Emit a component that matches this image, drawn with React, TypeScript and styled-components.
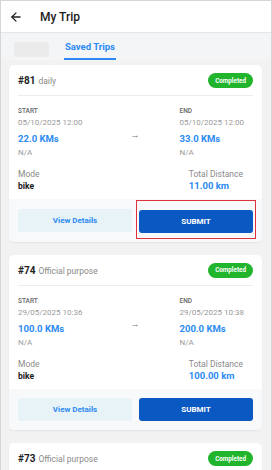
import React from "react";
import styled, { createGlobalStyle } from "styled-components";

const Global = createGlobalStyle`
  html, body { margin: 0; padding: 0; background: #f2f2f2; }
  body { font-family: Roboto, "Noto Sans", Arial, sans-serif; -webkit-font-smoothing: antialiased; }
  * { box-sizing: border-box; }
`;

const Frame = styled.div`
  width: 272px;
  height: 470px;
  overflow: hidden;
  border: 1px solid #d6d6d6;
  border-bottom: none;
  background: #f2f2f2;
`;

const TopBar = styled.div`
  height: 31px;
  background: #fff;
  display: flex;
  align-items: center;
  padding-left: 8px;
  box-shadow: 0 1px 1px rgba(0, 0, 0, 0.06);
  position: relative;
  z-index: 1;
`;

const BackBtn = styled.span`
  display: flex;
  width: 16px;
  color: #222;
`;

const Title = styled.h1`
  margin: 0 0 0 15px;
  font-size: 12px;
  font-weight: 500;
  color: #1a1a1a;
`;

const TabBar = styled.div`
  height: 28px;
  background: #f4f5f7;
  display: flex;
  align-items: stretch;
  padding-left: 13px;
  gap: 15px;
`;

const TabPlaceholder = styled.div`
  width: 35px;
  height: 15px;
  margin-top: 10px;
  background: #ebebeb;
  border-radius: 2px;
`;

const Tab = styled.div<{ $active?: boolean }>`
  display: flex;
  align-items: center;
  padding: 2px 1px 0 1px;
  font-size: 9.5px;
  font-weight: 700;
  color: #2b8af4;
  border-bottom: 2px solid ${(p) => (p.$active ? "#2b8af4" : "transparent")};
`;

const List = styled.div`
  padding: 5px 9px 0 8px;
  display: flex;
  flex-direction: column;
  gap: 13px;
`;

const Card = styled.div`
  background: #fff;
  border-radius: 5px;
  box-shadow: 0 1px 2px rgba(0, 0, 0, 0.06);
`;

const CardBody = styled.div`
  padding: 8px 9px 7px 9px;
`;

const CardHead = styled.div`
  display: flex;
  align-items: center;
  justify-content: space-between;
  height: 15px;
`;

const TripId = styled.div`
  display: flex;
  align-items: baseline;
  gap: 3px;
`;

const IdNum = styled.span`
  font-size: 10px;
  font-weight: 700;
  color: #222;
`;

const Purpose = styled.span`
  font-size: 8.5px;
  color: #8a8a8a;
`;

const Badge = styled.span`
  height: 15px;
  padding: 0 7px;
  border-radius: 8px;
  background: #21b52d;
  color: #fff;
  font-size: 6.3px;
  font-weight: 700;
  display: flex;
  align-items: center;
`;

const Divider = styled.div`
  height: 1px;
  background: #ececec;
  margin-top: 7px;
`;

const Route = styled.div`
  display: flex;
  justify-content: space-between;
  align-items: center;
  padding-top: 10px;
  padding-right: 9px;
`;

const Col = styled.div`
  display: flex;
  flex-direction: column;
`;

const Label = styled.div`
  font-size: 6.5px;
  font-weight: 500;
  color: #666;
  line-height: 10px;
`;

const Muted = styled.div`
  font-size: 8px;
  color: #9a9a9a;
  line-height: 12px;
  margin-top: 1px;
`;

const Km = styled.div`
  font-size: 9.5px;
  font-weight: 700;
  color: #2b8af4;
  line-height: 14px;
  margin-top: 3px;
`;

const Arrow = styled.span`
  font-size: 9px;
  line-height: 10px;
  color: #777;
  margin-left: 8px;
  margin-top: 4px;
`;

const ModeRow = styled.div`
  display: flex;
  justify-content: space-between;
  margin-top: 9px;
  padding-right: 10px;
`;

const Key = styled.div`
  font-size: 8.5px;
  color: #8a8a8a;
  line-height: 12px;
`;

const Val = styled.div<{ $blue?: boolean }>`
  font-size: ${(p) => (p.$blue ? "9.5px" : "8.5px")};
  font-weight: 700;
  color: ${(p) => (p.$blue ? "#2b8af4" : "#1a1a1a")};
  line-height: 12px;
`;

const Footer = styled.div`
  background: #f8f9fb;
  border-radius: 0 0 5px 5px;
  padding: 9.5px 9px 9px 9px;
  display: grid;
  grid-template-columns: 1fr 1fr;
  gap: 7px;
`;

const Btn = styled.button<{ $primary?: boolean }>`
  height: 23px;
  border: none;
  border-radius: 3px;
  font-family: inherit;
  font-size: 8px;
  font-weight: 700;
  background: ${(p) => (p.$primary ? "#0a58c2" : "#e8f3f8")};
  color: ${(p) => (p.$primary ? "#fff" : "#2b8af4")};
  width: 100%;
  padding: 0;
`;

const Highlight = styled.div`
  position: relative;
`;

const RedBox = styled.span`
  position: absolute;
  top: -9px;
  bottom: -6px;
  left: -3px;
  right: -3px;
  border: 1.3px solid #e0303a;
  pointer-events: none;
`;

type Trip = {
  id: number;
  purpose: string;
  startDate: string;
  endDate: string;
  startKm: string;
  endKm: string;
  mode: string;
  total: string;
  highlight?: boolean;
};

const trips: Trip[] = [
  {
    id: 81,
    purpose: "daily",
    startDate: "05/10/2025 12:00",
    endDate: "05/10/2025 12:00",
    startKm: "22.0 KMs",
    endKm: "33.0 KMs",
    mode: "bike",
    total: "11.00 km",
    highlight: true,
  },
  {
    id: 74,
    purpose: "Official purpose",
    startDate: "29/05/2025 10:36",
    endDate: "29/05/2025 10:38",
    startKm: "100.0 KMs",
    endKm: "200.0 KMs",
    mode: "bike",
    total: "100.00 km",
  },
  {
    id: 73,
    purpose: "Official purpose",
    startDate: "28/05/2025 09:10",
    endDate: "28/05/2025 09:40",
    startKm: "50.0 KMs",
    endKm: "100.0 KMs",
    mode: "bike",
    total: "50.00 km",
  },
];

function TripCard({ t }: { t: Trip }) {
  const submit = <Btn $primary>SUBMIT</Btn>;
  return (
    <Card>
      <CardBody>
        <CardHead>
          <TripId>
            <IdNum>#{t.id}</IdNum>
            <Purpose>{t.purpose}</Purpose>
          </TripId>
          <Badge>Completed</Badge>
        </CardHead>
        <Divider />
        <Route>
          <Col>
            <Label>START</Label>
            <Muted>{t.startDate}</Muted>
            <Km>{t.startKm}</Km>
            <Muted>N/A</Muted>
          </Col>
          <Arrow>→</Arrow>
          <Col>
            <Label>END</Label>
            <Muted>{t.endDate}</Muted>
            <Km>{t.endKm}</Km>
            <Muted>N/A</Muted>
          </Col>
        </Route>
        <ModeRow>
          <Col>
            <Key>Mode</Key>
            <Val>{t.mode}</Val>
          </Col>
          <Col>
            <Key>Total Distance</Key>
            <Val $blue>{t.total}</Val>
          </Col>
        </ModeRow>
      </CardBody>
      <Footer>
        <Btn>View Details</Btn>
        {t.highlight ? (
          <Highlight>
            {submit}
            <RedBox />
          </Highlight>
        ) : (
          submit
        )}
      </Footer>
    </Card>
  );
}

export default function App() {
  return (
    <>
      <Global />
      <Frame>
        <TopBar>
          <BackBtn>
            <svg width="14" height="14" viewBox="0 0 24 24" fill="none" stroke="currentColor" strokeWidth="2.2" strokeLinecap="round" strokeLinejoin="round">
              <path d="m12 19-7-7 7-7" />
              <path d="M19 12H5" />
            </svg>
          </BackBtn>
          <Title>My Trip</Title>
        </TopBar>
        <TabBar>
          <TabPlaceholder />
          <Tab $active>Saved Trips</Tab>
        </TabBar>
        <List>
          {trips.map((t) => (
            <TripCard key={t.id} t={t} />
          ))}
        </List>
      </Frame>
    </>
  );
}
